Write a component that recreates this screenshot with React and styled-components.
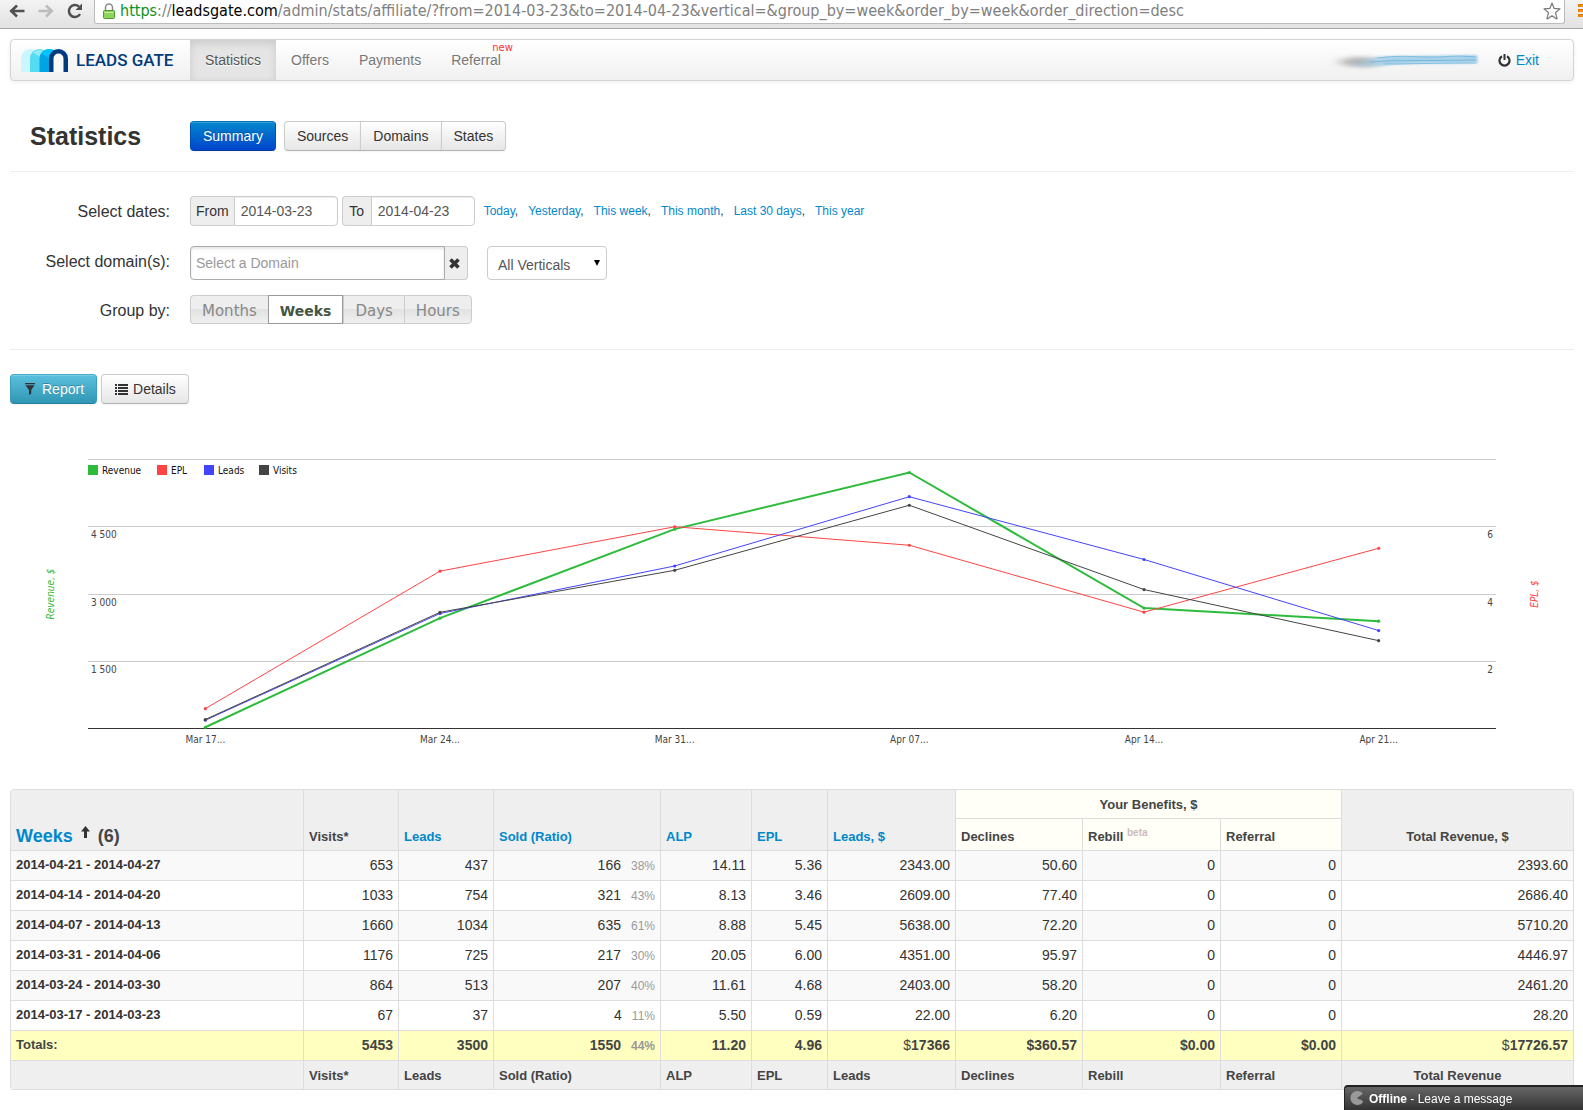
import { useState } from "react";
import styled, { createGlobalStyle, css } from "styled-components";

const colorText = "#333";
const colorLink = "#0088cc";
const colorBorder = "#ddd";
const fontSans = `"Liberation Sans", Arial, sans-serif`;
const fontCondensed = `"DejaVu Sans Condensed", "DejaVu Sans", sans-serif`;

const navItems = ["Statistics", "Offers", "Payments", "Referral"];
const sections = ["Sources", "Domains", "States"];
const ranges = ["Today", "Yesterday", "This week", "This month", "Last 30 days", "This year"];
const groups = ["Months", "Weeks", "Days", "Hours"];
const colWidths = [293, 95, 95, 167, 91, 76, 128, 127, 138, 121, 232];

const rows = [
  ["2014-04-21 - 2014-04-27", "653", "437", "166", "38%", "14.11", "5.36", "2343.00", "50.60", "0", "0", "2393.60"],
  ["2014-04-14 - 2014-04-20", "1033", "754", "321", "43%", "8.13", "3.46", "2609.00", "77.40", "0", "0", "2686.40"],
  ["2014-04-07 - 2014-04-13", "1660", "1034", "635", "61%", "8.88", "5.45", "5638.00", "72.20", "0", "0", "5710.20"],
  ["2014-03-31 - 2014-04-06", "1176", "725", "217", "30%", "20.05", "6.00", "4351.00", "95.97", "0", "0", "4446.97"],
  ["2014-03-24 - 2014-03-30", "864", "513", "207", "40%", "11.61", "4.68", "2403.00", "58.20", "0", "0", "2461.20"],
  ["2014-03-17 - 2014-03-23", "67", "37", "4", "11%", "5.50", "0.59", "22.00", "6.20", "0", "0", "28.20"],
];

const weekLabels = ["Mar 17...", "Mar 24...", "Mar 31...", "Apr 07...", "Apr 14...", "Apr 21..."];

// every series has its own scale, max is the value at the top grid line
const series = [
  { name: "Revenue", color: "#2dbb3c", max: 6000, width: 2, legendX: 78, values: [28.2, 2461.2, 4446.97, 5710.2, 2686.4, 2393.6] },
  { name: "EPL", color: "#ff4444", max: 8, width: 1, legendX: 147, values: [0.59, 4.68, 6, 5.45, 3.46, 5.36] },
  { name: "Leads", color: "#4444ff", max: 1200, width: 1, legendX: 194, values: [37, 513, 725, 1034, 754, 437] },
  { name: "Visits", color: "#444444", max: 2000, width: 1, legendX: 249, values: [67, 864, 1176, 1660, 1033, 653] },
];

const plot = { left: 78, right: 1486, top: 29.5, bottom: 298.5 };
const pointX = (i) => plot.left + ((plot.right - plot.left) / 6) * (i + 0.5);
const pointY = (value, max) => plot.bottom - (value / max) * (plot.bottom - plot.top);

const Logo = () => (
  <svg width="47" height="23" viewBox="0 0 47 23" aria-hidden="true">
    <path d="M0 23V9.500a9.500 9.500 0 0 1 19 0V23z" fill="#c9f6ff" />
    <path d="M9 23V9.500a9.500 9.500 0 0 1 19 0V23z" fill="#55dcf3" />
    <path d="M12 3.500A9.500 9.500 0 0 1 24 3L19 8z" fill="#8feafa" />
    <path d="M18.500 23V9.500a9.500 9.500 0 0 1 19 0V23z" fill="#00a4e4" />
    <path d="M20.500 4.500C23 1.500 25.500 0 28 0c3.500 0 6.500 1.500 8 4L28 9z" fill="#00c3ff" />
    <path d="M28 23V9.500a9.500 9.500 0 0 1 19 0V23z" fill="#003b7e" />
    <path d="M32.500 23V9.500a5 5 0 0 1 10 0V23z" fill="#f8f8f8" />
  </svg>
);

const ArrowIcon = ({ color, flip }) => (
  <svg width="16" height="14" viewBox="0 0 16 14" aria-hidden="true">
    <path
      d="M8 1.500L2.200 7L8 12.500M2.500 7H15.500"
      fill="none"
      stroke={color}
      strokeWidth="2.600"
      transform={flip ? "translate(16 0) scale(-1 1)" : undefined}
    />
  </svg>
);

const ReloadIcon = () => (
  <svg width="16" height="16" viewBox="0 0 16 16" aria-hidden="true">
    <path d="M13 11.200A6 6 0 1 1 12 3.600" fill="none" stroke="#505050" strokeWidth="2.500" />
    <path d="M15 0.500V7H8.500z" fill="#505050" />
  </svg>
);

const LockIcon = () => (
  <svg width="12" height="16" viewBox="0 0 12 16" aria-hidden="true">
    <path d="M2.500 8V4.500a3.500 3.500 0 0 1 7 0V8" fill="none" stroke="#8a8a8a" strokeWidth="1.500" />
    <rect x="0.500" y="7.500" width="11" height="8" rx="1" fill="#8fd45c" stroke="#4f9a2d" />
    <path d="M1.500 9.500H10.500" stroke="#c6efa4" />
  </svg>
);

const StarIcon = () => (
  <svg width="18" height="18" viewBox="0 0 18 18" aria-hidden="true">
    <path
      d="M9 1l2.200 5.400 5.800.400-4.500 3.800 1.500 5.700c.1.500-.4.700-.8.500L9 13.800l-4.200 3c-.4.200-.9 0-.8-.5l1.500-5.700L1 6.800l5.800-.4z"
      fill="#fff"
      stroke="#777"
      strokeWidth="1.200"
      strokeLinejoin="round"
    />
  </svg>
);

const MenuIcon = () => (
  <svg width="5" height="15" viewBox="0 0 5 15" aria-hidden="true">
    <path d="M0 1.500H5M0 6.500H5M0 11.500H5" stroke="#e07b00" strokeWidth="3" />
    <path d="M1 2H5M1 7H5M1 12H5" stroke="#ffa726" />
  </svg>
);

const PowerIcon = () => (
  <svg width="13" height="13" viewBox="0 0 13 13" aria-hidden="true">
    <path d="M4 2.200a5 5 0 1 0 5 0" fill="none" stroke="#333" strokeWidth="2.200" />
    <path d="M6.500 0V6" stroke="#333" strokeWidth="2" />
  </svg>
);

const FilterIcon = () => (
  <svg width="14" height="12" viewBox="-2 0 14 12" aria-hidden="true">
    <path d="M0 0h10v1.300H0zM0.500 2.200h9L6.300 7v3.600L4 12V7z" fill="#333" />
  </svg>
);

const ListIcon = () => (
  <svg width="14" height="11" viewBox="-1 0 14 11" aria-hidden="true">
    <path d="M0 1H2M3 1H13M0 4H2M3 4H13M0 7H2M3 7H13M0 10H2M3 10H13" stroke="#333" strokeWidth="2" />
  </svg>
);

const RemoveIcon = () => (
  <svg width="11" height="11" viewBox="0 0 11 11" aria-hidden="true">
    <path d="M1.500 1.500L9.500 9.500M9.500 1.500L1.500 9.500" stroke="#333" strokeWidth="3.600" />
  </svg>
);

const SortIcon = () => (
  <svg width="9" height="12" viewBox="0 0 9 12" aria-hidden="true">
    <path d="M4.500 0L9 5.500H6V12H3V5.500H0z" fill="#333" />
  </svg>
);

const ChatIcon = () => (
  <svg width="14" height="15" viewBox="0 0 14 15" aria-hidden="true">
    <path d="M7 7L13 2.800A7 7 0 1 0 13 11.200Q13 9 9.500 8.500z" fill="#999" />
  </svg>
);

// brushed over account name
const AccountSmudge = () => (
  <svg width="160" height="24" viewBox="0 0 160 24" aria-hidden="true">
    <defs>
      <filter id="soft" x="-40%" y="-150%" width="180%" height="400%">
        <feGaussianBlur stdDeviation="7 2" />
      </filter>
      <filter id="fine" x="-10%" y="-60%" width="120%" height="220%">
        <feGaussianBlur stdDeviation="1" />
      </filter>
      <filter id="brush" x="-10%" y="-60%" width="120%" height="220%">
        <feGaussianBlur stdDeviation="1 0.400" />
      </filter>
      <linearGradient id="fade">
        <stop offset="0" stopColor="#9ccbe6" stopOpacity="0" />
        <stop offset="0.300" stopColor="#9ccbe6" />
        <stop offset="1" stopColor="#9ccbe6" />
      </linearGradient>
    </defs>
    <ellipse cx="38" cy="14" rx="20" ry="5" fill="#888" opacity="0.600" filter="url(#soft)" />
    <path
      d="M26 16C44 9 60 8 84 8S130 7 155 7L156 15C130 16 110 15 84 16S50 20 36 19z"
      fill="url(#fade)"
      opacity="0.850"
      filter="url(#fine)"
    />
    <path
      d="M55 10C80 7 90 9 110 9S130 7 154 9M48 14C70 12 110 13 154 12M62 16C90 16 110 15 154 15"
      fill="none"
      stroke="#5eaedb"
      strokeOpacity="0.700"
      filter="url(#brush)"
    />
  </svg>
);

const Chart = () => (
  <ChartSvg viewBox="0 0 1564 340" role="img" aria-label="Revenue, EPL, Leads, Visits">
    {[29.5, 96.5, 164.5, 231.5].map((y) => (
      <path key={y} d={`M${plot.left} ${y}H${plot.right}`} stroke="#ccc" />
    ))}
    <path d={`M${plot.left} ${plot.bottom}H${plot.right}`} stroke="#333" />
    {series.map((s) => (
      <g key={s.name}>
        <rect x={s.legendX} y="35" width="10" height="10" fill={s.color} />
        <text x={s.legendX + 14} y="44" fill="#111">{s.name}</text>
        <polyline
          points={s.values.map((v, i) => `${pointX(i)},${pointY(v, s.max)}`).join(" ")}
          fill="none"
          stroke={s.color}
          strokeWidth={s.width}
        />
        {s.values.map((v, i) => (
          <circle key={i} cx={pointX(i)} cy={pointY(v, s.max)} r="1.600" fill={s.color} />
        ))}
      </g>
    ))}
    <text x="81" y="108">4 500</text>
    <text x="81" y="176">3 000</text>
    <text x="81" y="243">1 500</text>
    <text x="1483" y="108" textAnchor="end">6</text>
    <text x="1483" y="176" textAnchor="end">4</text>
    <text x="1483" y="243" textAnchor="end">2</text>
    {weekLabels.map((label, i) => (
      <text key={label} x={pointX(i)} y="313" textAnchor="middle">{label}</text>
    ))}
    <AxisTitle transform="translate(44 164) rotate(-90)" fill="#2dbb3c">Revenue, $</AxisTitle>
    <AxisTitle transform="translate(1528 164) rotate(-90)" fill="#ff4444">EPL, $</AxisTitle>
  </ChartSvg>
);

const App = () => {
  const [group, setGroup] = useState("Weeks");
  const [from, setFrom] = useState("2014-03-23");
  const [to, setTo] = useState("2014-04-23");
  const [domain, setDomain] = useState("");

  return (
    <>
      <GlobalStyle />
      <BrowserBar>
        <ToolButton aria-label="Back"><ArrowIcon color="#505050" /></ToolButton>
        <ToolButton aria-label="Forward"><ArrowIcon color="#bdbdbd" flip /></ToolButton>
        <ToolButton aria-label="Reload"><ReloadIcon /></ToolButton>
        <AddressBar>
          <LockIcon />
          <Url>
            <Scheme>https</Scheme>://<Host>leadsgate.com</Host>
            /admin/stats/affiliate/?from=2014-03-23&amp;to=2014-04-23&amp;vertical=&amp;group_by=week&amp;order_by=week&amp;order_direction=desc
          </Url>
          <StarIcon />
        </AddressBar>
        <MenuButton aria-label="Menu"><MenuIcon /></MenuButton>
      </BrowserBar>

      <Page>
        <Navbar>
          <Brand href="#">
            <Logo />
            LEADS GATE
          </Brand>
          {navItems.map((item) => (
            <NavLink key={item} href="#" $active={item === "Statistics"}>
              {item}
              {item === "Referral" && <NewBadge>new</NewBadge>}
            </NavLink>
          ))}
          <Account>
            <AccountSmudge />
            <ExitLink href="#">
              <PowerIcon />
              Exit
            </ExitLink>
          </Account>
        </Navbar>

        <TitleRow>
          <Title>Statistics</Title>
          <Button $variant="primary">Summary</Button>
          <ButtonGroup>
            {sections.map((s) => (
              <Button key={s}>{s}</Button>
            ))}
          </ButtonGroup>
        </TitleRow>

        <Filters>
          <FilterLabel as="span">Select dates:</FilterLabel>
          <DatesRow>
            <InputGroup>
              <Addon htmlFor="from">From</Addon>
              <DateInput id="from" value={from} onChange={(e) => setFrom(e.target.value)} />
            </InputGroup>
            <InputGroup>
              <Addon htmlFor="to">To</Addon>
              <DateInput id="to" value={to} onChange={(e) => setTo(e.target.value)} />
            </InputGroup>
            <Ranges>
              {ranges.map((r, i) => (
                <span key={r}>
                  <a href="#">{r}</a>
                  {i < ranges.length - 1 && ","}
                </span>
              ))}
            </Ranges>
          </DatesRow>

          <FilterLabel htmlFor="domain">Select domain(s):</FilterLabel>
          <DomainRow>
            <InputGroup>
              <DomainInput
                id="domain"
                placeholder="Select a Domain"
                value={domain}
                onChange={(e) => setDomain(e.target.value)}
              />
              <ClearButton aria-label="Clear" onClick={() => setDomain("")}>
                <RemoveIcon />
              </ClearButton>
            </InputGroup>
            <SelectWrap>
              <Select aria-label="Verticals">
                <option>All Verticals</option>
              </Select>
              <Caret />
            </SelectWrap>
          </DomainRow>

          <FilterLabel as="span">Group by:</FilterLabel>
          <Segments>
            {groups.map((g) => (
              <Segment key={g} $active={g === group} aria-pressed={g === group} onClick={() => setGroup(g)}>
                {g}
              </Segment>
            ))}
          </Segments>
        </Filters>

        <Actions>
          <Button $variant="info"><FilterIcon />Report</Button>
          <Button><ListIcon />Details</Button>
        </Actions>

        <Chart />

        <Table>
          <colgroup>
            {colWidths.map((w, i) => (
              <Col key={i} $w={w} />
            ))}
          </colgroup>
          <thead>
            <HeadTopRow>
              <HeadCell rowSpan="2">
                <WeeksTitle>
                  <a href="#">Weeks</a>
                  <SortIcon />
                  (6)
                </WeeksTitle>
              </HeadCell>
              <HeadCell rowSpan="2">Visits*</HeadCell>
              <HeadCell rowSpan="2"><a href="#">Leads</a></HeadCell>
              <HeadCell rowSpan="2"><a href="#">Sold (Ratio)</a></HeadCell>
              <HeadCell rowSpan="2"><a href="#">ALP</a></HeadCell>
              <HeadCell rowSpan="2"><a href="#">EPL</a></HeadCell>
              <HeadCell rowSpan="2"><a href="#">Leads, $</a></HeadCell>
              <HeadCell colSpan="3" $benefit $center>Your Benefits, $</HeadCell>
              <HeadCell rowSpan="2" $center>Total Revenue, $</HeadCell>
            </HeadTopRow>
            <HeadSubRow>
              <HeadCell $benefit>Declines</HeadCell>
              <HeadCell $benefit>Rebill <Beta>beta</Beta></HeadCell>
              <HeadCell $benefit>Referral</HeadCell>
            </HeadSubRow>
          </thead>
          <tbody>
            {rows.map(([week, visits, leads, sold, ratio, ...rest]) => (
              <BodyRow key={week}>
                <WeekCell>{week}</WeekCell>
                <Cell>{visits}</Cell>
                <Cell>{leads}</Cell>
                <Cell>{sold}<Ratio>{ratio}</Ratio></Cell>
                {rest.map((value, i) => (
                  <Cell key={i}>{value}</Cell>
                ))}
              </BodyRow>
            ))}
          </tbody>
          <tfoot>
            <TotalsRow>
              <WeekCell>Totals:</WeekCell>
              <Cell>5453</Cell>
              <Cell>3500</Cell>
              <Cell>1550<Ratio>44%</Ratio></Cell>
              <Cell>11.20</Cell>
              <Cell>4.96</Cell>
              <Cell><Currency>$</Currency>17366</Cell>
              <Cell>$360.57</Cell>
              <Cell>$0.00</Cell>
              <Cell>$0.00</Cell>
              <Cell><Currency>$</Currency>17726.57</Cell>
            </TotalsRow>
            <HeadTopRow>
              <HeadCell />
              <HeadCell>Visits*</HeadCell>
              <HeadCell>Leads</HeadCell>
              <HeadCell>Sold (Ratio)</HeadCell>
              <HeadCell>ALP</HeadCell>
              <HeadCell>EPL</HeadCell>
              <HeadCell>Leads</HeadCell>
              <HeadCell>Declines</HeadCell>
              <HeadCell>Rebill</HeadCell>
              <HeadCell>Referral</HeadCell>
              <HeadCell $center>Total Revenue</HeadCell>
            </HeadTopRow>
          </tfoot>
        </Table>
      </Page>

      <ChatButton>
        <ChatIcon />
        <span><b>Offline</b> - Leave a message</span>
      </ChatButton>
    </>
  );
};

export default App;

const GlobalStyle = createGlobalStyle`
  * {
    box-sizing: border-box;
  }

  body {
    margin: 0;
    background: #fff;
    color: ${colorText};
    font: 14px/20px ${fontSans};
  }

  a {
    color: ${colorLink};
    text-decoration: none;
  }

  button,
  input,
  select {
    margin: 0;
    font: inherit;
  }

  svg {
    flex: none;
  }
`;

const BrowserBar = styled.div`
  display: flex;
  align-items: flex-start;
  height: 29px;
  padding-left: 9px;
  background: linear-gradient(#f3f3f3, #e2e2e2);
  border-bottom: 1px solid #a6a6a6;
`;

const ToolButton = styled.button`
  display: flex;
  align-items: center;
  width: 16px;
  height: 21px;
  margin-right: 13px;
  padding: 0;
  border: 0;
  background: none;
`;

const AddressBar = styled.div`
  display: flex;
  flex: 1;
  align-items: center;
  min-width: 0;
  height: 24px;
  margin-left: -2px;
  padding: 0 3px 2px 8px;
  background: #fff;
  border: 1px solid #bbb;
  border-top: 0;
  border-radius: 0 0 3px 3px;
`;

const Url = styled.div`
  flex: 1;
  min-width: 0;
  padding-left: 5px;
  overflow: hidden;
  color: #808080;
  font-family: ${fontCondensed};
  font-size: 16px;
  line-height: 22px;
  white-space: nowrap;
`;

const Scheme = styled.span`
  color: #0a9314;
`;

const Host = styled.span`
  color: #000;
`;

const MenuButton = styled.button`
  display: flex;
  margin-left: 13px;
  padding: 4px 0 0;
  border: 0;
  background: none;
`;

const Page = styled.main`
  padding: 10px 9px 20px 10px;
`;

const Navbar = styled.nav`
  display: flex;
  height: 42px;
  background: linear-gradient(#fff, #f0f0f0);
  border: 1px solid #d4d4d4;
  border-radius: 4px;
  box-shadow: 0 1px 4px rgba(0, 0, 0, 0.07);
`;

const Brand = styled.a`
  display: flex;
  align-items: center;
  gap: 8px;
  width: 179px;
  padding-left: 10px;
  color: #003b7e;
  font: 500 17px/20px Roboto, sans-serif;
  white-space: nowrap;
`;

const NavLink = styled.a`
  position: relative;
  padding: 10px 15px;
  color: #777;
  text-shadow: 0 1px 0 #fff;

  ${({ $active }) =>
    $active &&
    css`
      background: #e5e5e5;
      box-shadow: inset 0 3px 8px rgba(0, 0, 0, 0.125);
      color: #555;
    `}
`;

const NewBadge = styled.span`
  position: absolute;
  top: 2px;
  right: 3px;
  color: #f33;
  font: 10px/12px "DejaVu Sans", sans-serif;
`;

const Account = styled.div`
  display: flex;
  align-items: center;
  gap: 16px;
  margin-left: auto;
  padding-right: 34px;
`;

const ExitLink = styled.a`
  display: flex;
  align-items: center;
  gap: 5px;
`;

const TitleRow = styled.header`
  display: flex;
  align-items: center;
  margin-top: 40px;
  padding-bottom: 20px;
  border-bottom: 1px solid #eee;
`;

const Title = styled.h1`
  width: 180px;
  margin: 0;
  padding-left: 20px;
  font-size: 25px;
  line-height: 30px;
`;

const variants = {
  primary: css`
    background: linear-gradient(#0088cc, #0044cc);
    border-color: #0074b8 #0050b8 #003c9a;
    color: #fff;
    text-shadow: 0 -1px 0 rgba(0, 0, 0, 0.25);
  `,
  info: css`
    background: linear-gradient(#5bc0de, #2f96b4);
    border-color: #49aecd #3a9fbd #26809b;
    color: #fff;
    text-shadow: 0 -1px 0 rgba(0, 0, 0, 0.25);
  `,
};

const Button = styled.button`
  display: inline-flex;
  align-items: center;
  gap: 5px;
  height: 30px;
  padding: 0 12px;
  background: linear-gradient(#fff, #e6e6e6);
  border: 1px solid #ccc;
  border-bottom-color: #b3b3b3;
  border-radius: 4px;
  box-shadow: inset 0 1px 0 rgba(255, 255, 255, 0.2), 0 1px 2px rgba(0, 0, 0, 0.05);
  color: ${colorText};
  cursor: pointer;
  ${({ $variant }) => variants[$variant]}
`;

const ButtonGroup = styled.div`
  display: flex;
  margin-left: 8px;

  ${Button} {
    border-radius: 0;
  }

  ${Button} + ${Button} {
    margin-left: -1px;
  }

  ${Button}:first-child {
    border-radius: 4px 0 0 4px;
  }

  ${Button}:last-child {
    border-radius: 0 4px 4px 0;
  }
`;

const Filters = styled.section`
  display: grid;
  grid-template-columns: 160px 1fr;
  grid-template-rows: 35px 34px 29px;
  gap: 15px 20px;
  padding: 24px 0 25px;
  border-bottom: 1px solid #eee;
`;

const FilterLabel = styled.label`
  padding-top: 6px;
  font-size: 16px;
  text-align: right;
`;

const DatesRow = styled.div`
  display: flex;
  gap: 4px;
  height: 30px;
`;

const DomainRow = styled.div`
  display: flex;
  gap: 19px;
`;

const InputGroup = styled.div`
  display: flex;
`;

const Addon = styled.label`
  display: flex;
  align-items: center;
  justify-content: center;
  min-width: 29px;
  padding: 0 5px;
  background: #eee;
  border: 1px solid #ccc;
  border-right: 0;
  border-radius: 4px 0 0 4px;
`;

const DateInput = styled.input`
  width: 104px;
  padding: 0 6px;
  border: 1px solid #ccc;
  border-radius: 0 4px 4px 0;
  box-shadow: inset 0 1px 1px rgba(0, 0, 0, 0.075);
  color: #555;
`;

const Ranges = styled.div`
  display: flex;
  align-items: center;
  gap: 10px;
  padding-left: 5px;
  font-size: 12px;
`;

const DomainInput = styled.input`
  width: 255px;
  padding: 0 5px;
  border: 1px solid #aaa;
  border-radius: 4px 0 0 4px;
  box-shadow: inset 0 2px 3px rgba(0, 0, 0, 0.1);
  color: #555;

  &::placeholder {
    color: #999;
    opacity: 1;
  }
`;

const ClearButton = styled.button`
  display: flex;
  align-items: center;
  justify-content: center;
  width: 23px;
  padding: 0 4px 0 0;
  background: #eee;
  border: 1px solid #ccc;
  border-left: 0;
  border-radius: 0 4px 4px 0;
`;

const SelectWrap = styled.div`
  position: relative;
  display: flex;
`;

const Select = styled.select`
  width: 120px;
  padding: 4px 10px 0;
  appearance: none;
  background: #fff;
  border: 1px solid #ccc;
  border-radius: 4px;
  color: #555;
`;

const Caret = styled.span`
  position: absolute;
  top: 14px;
  right: 7px;
  border: 3px solid transparent;
  border-top: 6px solid #000;
  border-bottom: 0;
  pointer-events: none;
`;

const Segments = styled.div`
  display: flex;
`;

const Segment = styled.button`
  padding: 2px 11px 0;
  background: linear-gradient(#eee 48%, #e2e2e2 50%, #f0f0f0);
  border: 1px solid #ccc;
  border-right-width: 0;
  color: #888;
  font: 15px/20px "DejaVu Sans", sans-serif;

  &:first-child {
    border-radius: 4px 0 0 4px;
  }

  &:last-child {
    border-right-width: 1px;
    border-radius: 0 4px 4px 0;
  }

  ${({ $active }) =>
    $active &&
    css`
      background: #fff;
      border: 1px solid #999;
      color: #454;
      font-size: 14px;
      font-weight: bold;
    `}
`;

const Actions = styled.div`
  display: flex;
  gap: 4px;
  margin: 24px 0 26px;
`;

const ChartSvg = styled.svg`
  display: block;
  width: 100%;
  height: auto;
  fill: #444;
  font: 10px ${fontCondensed};
`;

const AxisTitle = styled.text`
  font-style: italic;
  text-anchor: middle;
`;

const Table = styled.table`
  width: 100%;
  margin-top: 19px;
  table-layout: fixed;
  border: 1px solid ${colorBorder};
  border-width: 0 1px 1px 0;
  border-collapse: separate;
  border-spacing: 0;
  border-radius: 4px;
  overflow: hidden;
`;

const Col = styled.col`
  width: ${({ $w }) => $w}px;
`;

const HeadTopRow = styled.tr`
  height: 29px;

  &:first-child > :first-child {
    border-top-left-radius: 4px;
  }
`;

const HeadSubRow = styled.tr`
  height: 32px;
`;

const HeadCell = styled.th`
  padding: 4px 5px 3px;
  background: ${({ $benefit }) => ($benefit ? "#fffff7" : "#efefef")};
  border: 1px solid ${colorBorder};
  border-width: 1px 0 0 1px;
  color: #444;
  font-size: 13px;
  text-align: ${({ $center }) => ($center ? "center" : "left")};
  vertical-align: bottom;
`;

const WeeksTitle = styled.span`
  display: flex;
  align-items: flex-start;
  gap: 8px;
  padding-bottom: 1px;
  font-size: 18px;
`;

const Beta = styled.sup`
  color: #cbb;
  font-size: 10px;
  line-height: 0;
`;

const Cell = styled.td`
  padding: 4px 5px;
  border: 1px solid ${colorBorder};
  border-width: 1px 0 0 1px;
  text-align: right;
  vertical-align: top;
`;

const WeekCell = styled(Cell)`
  font-size: 13px;
  font-weight: bold;
  text-align: left;
`;

const BodyRow = styled.tr`
  height: 30px;

  &:nth-child(odd) {
    background: #f9f9f9;
  }
`;

const TotalsRow = styled.tr`
  height: 30px;
  background: #ffffbf;
  color: #444;
  font-weight: bold;
`;

const Ratio = styled.span`
  margin-left: 10px;
  color: #999;
  font-size: 12px;
`;

const Currency = styled.span`
  font-weight: normal;
`;

const ChatButton = styled.button`
  position: fixed;
  right: 0;
  bottom: 0;
  display: flex;
  align-items: center;
  gap: 5px;
  width: 239px;
  height: 25px;
  padding: 0 5px;
  background: linear-gradient(#666, #333);
  border: 1px solid #222;
  border-width: 2px 0 0 1px;
  border-radius: 4px 0 0;
  color: #fff;
  font-size: 12px;
`;
